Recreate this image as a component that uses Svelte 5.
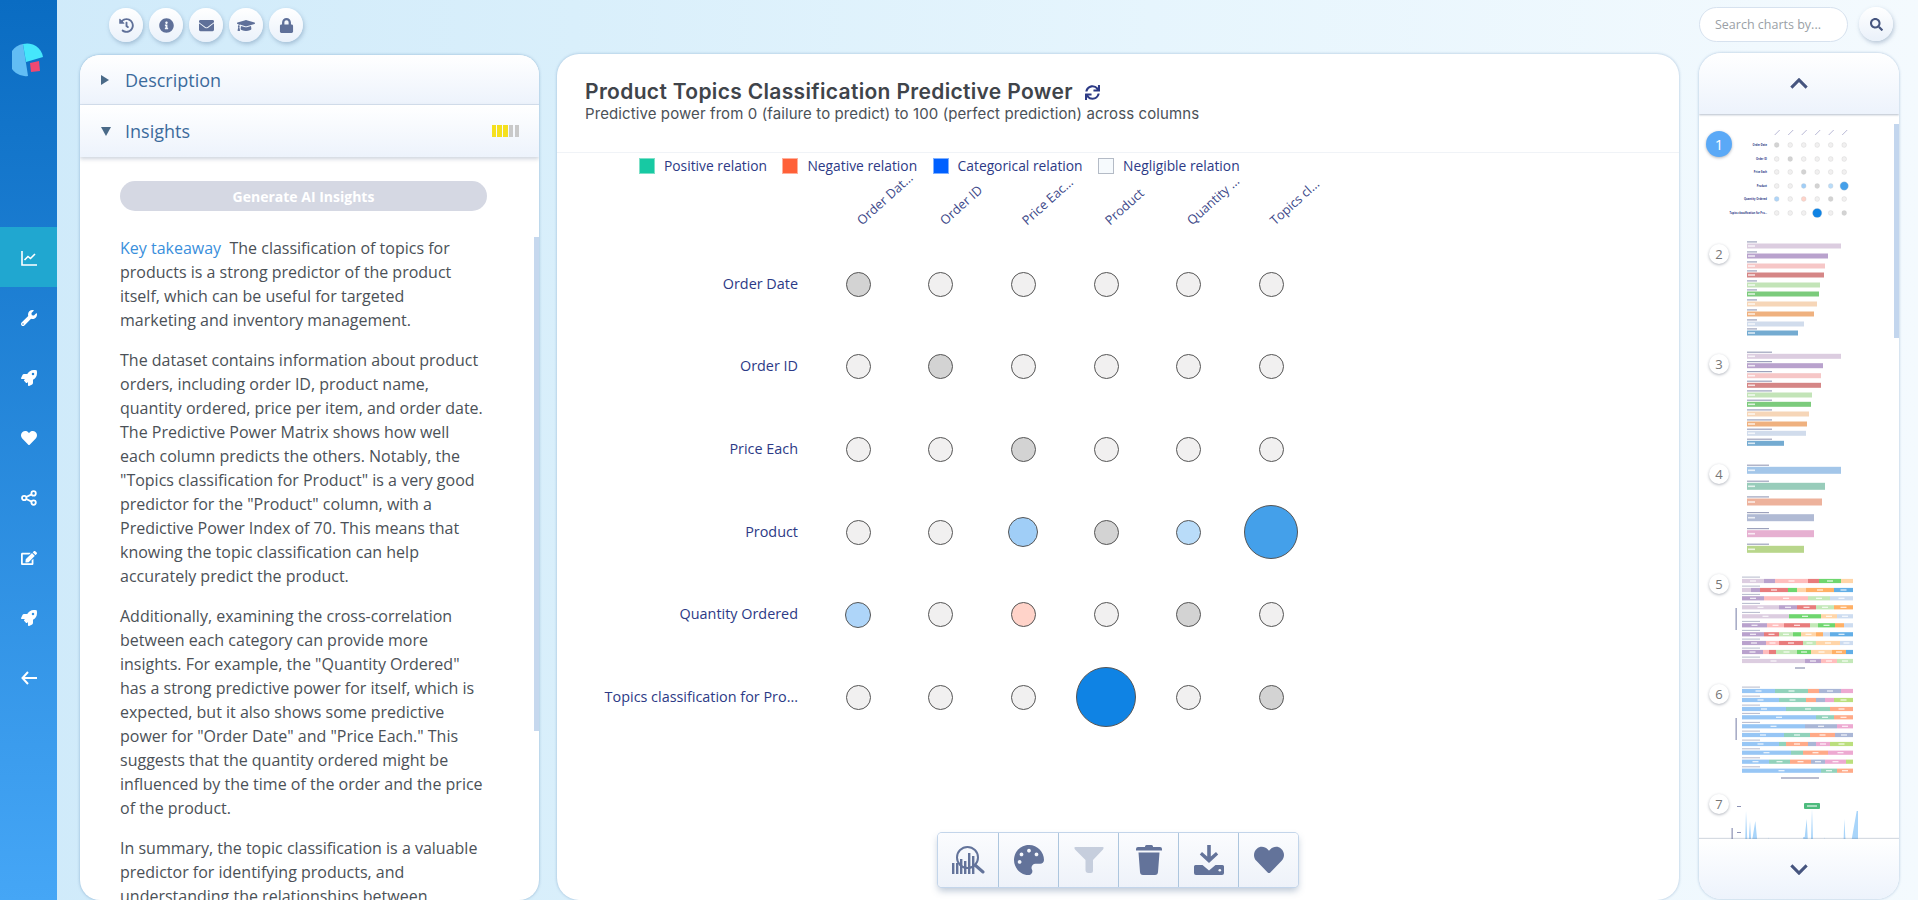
<script>
	const navIcons = [
		{ id: 'chart', active: true },
		{ id: 'wrench' },
		{ id: 'rocket' },
		{ id: 'heart' },
		{ id: 'share' },
		{ id: 'edit' },
		{ id: 'rocket' },
		{ id: 'back' }
	];

	const paths = {
		history: ['0 0 512 512', 'M504 255.531c.253 136.64-111.18 248.372-247.82 248.468-59.015.042-113.223-20.53-155.822-54.911-11.077-8.94-11.905-25.541-1.839-35.607l11.267-11.267c8.609-8.609 22.353-9.551 31.891-1.984C173.062 425.135 212.781 440 256 440c101.705 0 184-82.311 184-184 0-101.705-82.311-184-184-184-48.814 0-93.149 18.969-126.068 49.932l50.754 50.754c10.08 10.08 2.941 27.314-11.313 27.314H24c-8.837 0-16-7.163-16-16V38.627c0-14.254 17.234-21.393 27.314-11.314l49.372 49.372C129.209 34.136 189.552 8 256 8c136.81 0 247.747 110.78 248 247.531zm-180.912 78.784l9.823-12.63c8.138-10.463 6.253-25.542-4.21-33.679L288 256.349V152c0-13.255-10.745-24-24-24h-16c-13.255 0-24 10.745-24 24v135.651l65.409 50.874c10.463 8.137 25.541 6.253 33.679-4.21z'],
		info: ['0 0 512 512', 'M256 8C119.043 8 8 119.083 8 256c0 136.997 111.043 248 248 248s248-111.003 248-248C504 119.083 392.957 8 256 8zm0 110c23.196 0 42 18.804 42 42s-18.804 42-42 42-42-18.804-42-42 18.804-42 42-42zm56 254c0 6.627-5.373 12-12 12h-88c-6.627 0-12-5.373-12-12v-24c0-6.627 5.373-12 12-12h12v-64h-12c-6.627 0-12-5.373-12-12v-24c0-6.627 5.373-12 12-12h64c6.627 0 12 5.373 12 12v100h12c6.627 0 12 5.373 12 12v24z'],
		envelope: ['0 0 512 512', 'M502.3 190.8c3.9-3.1 9.7-.2 9.7 4.7V400c0 26.5-21.5 48-48 48H48c-26.5 0-48-21.5-48-48V195.6c0-5 5.7-7.8 9.7-4.7 22.4 17.4 52.1 39.5 154.1 113.6 21.1 15.4 56.7 47.8 92.2 47.6 35.7.3 72-32.8 92.3-47.6 102-74.1 131.6-96.3 154-113.7zM256 320c23.2.4 56.6-29.2 73.4-41.4 132.7-96.3 142.8-104.7 173.4-128.7 5.8-4.5 9.2-11.5 9.2-18.9v-19c0-26.5-21.5-48-48-48H48C21.5 64 0 85.5 0 112v19c0 7.4 3.4 14.3 9.2 18.9 30.6 23.9 40.7 32.4 173.4 128.7 16.8 12.2 50.2 41.8 73.4 41.4z'],
		cap: ['0 0 640 512', 'M622.34 153.2L343.4 67.5c-15.2-4.67-31.6-4.67-46.79 0L17.66 153.2c-23.54 7.23-23.54 38.36 0 45.59l48.63 14.94c-10.67 13.19-17.23 29.28-17.88 46.9C38.78 266.15 32 276.11 32 288c0 10.78 5.68 19.85 13.86 25.65L20.33 428.53C18.11 438.52 25.71 448 35.94 448h56.11c10.24 0 17.84-9.48 15.62-19.47L82.14 313.65C90.32 307.85 96 298.78 96 288c0-11.57-6.47-21.25-15.66-26.87.76-15.02 8.44-28.3 20.69-36.72L296.6 284.5c9.06 2.78 26.44 6.25 46.79 0l278.95-85.7c23.55-7.24 23.55-38.36 0-45.6zM352.79 315.09c-28.53 8.76-52.84 3.92-65.59 0l-145.02-44.55L128 384c0 35.35 85.96 64 192 64s192-28.65 192-64l-14.18-113.47-145.03 44.56z'],
		lock: ['0 0 448 512', 'M400 224h-24v-72C376 68.2 307.8 0 224 0S72 68.2 72 152v72H48c-26.5 0-48 21.5-48 48v192c0 26.5 21.5 48 48 48h352c26.5 0 48-21.5 48-48V272c0-26.5-21.5-48-48-48zm-104 0H152v-72c0-39.7 32.3-72 72-72s72 32.3 72 72v72z'],
		search: ['0 0 512 512', 'M505 442.7L405.3 343c-4.5-4.5-10.6-7-17-7H372c27.6-35.3 44-79.7 44-128C416 93.1 322.9 0 208 0S0 93.1 0 208s93.1 208 208 208c48.3 0 92.7-16.4 128-44v16.3c0 6.4 2.5 12.5 7 17l99.7 99.7c9.4 9.4 24.6 9.4 33.9 0l28.3-28.3c9.4-9.4 9.4-24.6.1-34zM208 336c-70.7 0-128-57.2-128-128 0-70.7 57.2-128 128-128 70.7 0 128 57.2 128 128 0 70.7-57.2 128-128 128z'],
		wrench: ['0 0 512 512', 'M507.73 109.1c-2.24-9.03-13.54-12.09-20.12-5.51l-74.36 74.36-67.88-11.31-11.31-67.88 74.36-74.36c6.62-6.62 3.43-17.9-5.66-20.16-47.38-11.74-99.55.91-136.58 37.93-39.64 39.64-50.55 97.1-34.05 147.2L18.74 402.76c-24.99 24.99-24.99 65.51 0 90.5 24.99 24.99 65.51 24.99 90.5 0l213.21-213.21c50.12 16.71 107.47 5.68 147.37-34.22 37.07-37.07 49.7-89.32 37.91-136.73zM64 472c-13.25 0-24-10.75-24-24 0-13.26 10.75-24 24-24s24 10.74 24 24c0 13.25-10.75 24-24 24z'],
		rocket: ['0 0 512 512', 'M505.12 19.09c-1.19-5.53-6.66-11-12.21-12.19C460.72 0 435.51 0 410.41 0 307.18 0 245.27 55.2 199.05 128H94.84c-16.35.02-35.56 11.88-42.89 26.48L2.52 253.3A28.4 28.4 0 0 0 0 264a24 24 0 0 0 24.01 24h103.81l-22.47 22.47c-11.37 11.36-13 32.26 0 45.25l50.9 50.91c11.16 11.19 32.16 13.16 45.28 0l22.47-22.47V488a24 24 0 0 0 24.01 24 28.56 28.56 0 0 0 10.71-2.52l98.73-49.39c14.63-7.3 26.51-26.5 26.51-42.86V312.8c72.6-46.31 128.03-108.41 128.03-211.1C512.08 76.5 512.08 51.3 505.12 19.09zM384.04 168a40 40 0 1 1 40.01-40 40.02 40.02 0 0 1-40.01 40z'],
		heart: ['0 0 512 512', 'M462.3 62.6C407.5 15.9 326 24.3 275.7 76.2L256 96.5l-19.7-20.3C186.1 24.3 104.5 15.9 49.7 62.6c-62.8 53.6-66.1 149.8-9.9 207.9l193.5 199.8c12.5 12.9 32.8 12.9 45.3 0l193.5-199.8c56.3-58.1 53-154.3-9.8-207.9z'],
		edit: ['0 0 576 512', 'M402.6 83.2l90.2 90.2c3.8 3.8 3.8 10 0 13.8L274.4 405.6l-92.8 10.3c-12.4 1.4-22.9-9.1-21.5-21.5l10.3-92.8L388.8 83.2c3.8-3.8 10-3.8 13.8 0zm162-22.9l-48.8-48.8c-15.2-15.2-39.9-15.2-55.2 0l-35.4 35.4c-3.8 3.8-3.8 10 0 13.8l90.2 90.2c3.8 3.8 10 3.8 13.8 0l35.4-35.4c15.2-15.3 15.2-40 0-55.2zM384 346.2V448H64V128h229.8c3.2 0 6.2-1.3 8.5-3.5l40-40c7.6-7.6 2.2-20.5-8.5-20.5H48C21.5 64 0 85.5 0 112v352c0 26.5 21.5 48 48 48h352c26.5 0 48-21.5 48-48V306.2c0-10.7-12.9-16-20.5-8.5l-40 40c-2.2 2.3-3.5 5.3-3.5 8.5z'],
		sync: ['0 0 512 512', 'M440.65 12.57l4 82.77A247.16 247.16 0 0 0 255.83 8C134.73 8 33.91 94.92 12.29 209.82A12 12 0 0 0 24.09 224h49.05a12 12 0 0 0 11.67-9.26 175.91 175.91 0 0 1 317-56.94l-101.46-4.86a12 12 0 0 0-12.57 12v47.41a12 12 0 0 0 12 12H500a12 12 0 0 0 12-12V12a12 12 0 0 0-12-12h-47.37a12 12 0 0 0-11.98 12.57zM255.83 432a175.61 175.61 0 0 1-146-77.8l101.8 4.87a12 12 0 0 0 12.57-12v-47.4a12 12 0 0 0-12-12H12a12 12 0 0 0-12 12V500a12 12 0 0 0 12 12h47.35a12 12 0 0 0 12-12.6l-4.15-82.57A247.17 247.17 0 0 0 255.83 504c121.11 0 221.93-86.92 243.55-201.82a12 12 0 0 0-11.8-14.18h-49.05a12 12 0 0 0-11.67 9.26A175.86 175.86 0 0 1 255.83 432z'],
		palette: ['0 0 512 512', 'M204.3 5C104.9 24.4 24.8 104.3 5.2 203.4c-37 187 131.7 326.4 258.8 306.7 41.2-6.4 61.4-54.6 42.5-91.7-23.1-45.4 9.9-98.4 60.9-98.4h79.7c35.8 0 64.8-29.6 64.9-65.3C511.5 97.1 368.1-26.9 204.3 5zM96 320c-17.7 0-32-14.3-32-32s14.3-32 32-32 32 14.3 32 32-14.3 32-32 32zm32-128c-17.7 0-32-14.3-32-32s14.3-32 32-32 32 14.3 32 32-14.3 32-32 32zm128-64c-17.7 0-32-14.3-32-32s14.3-32 32-32 32 14.3 32 32-14.3 32-32 32zm128 64c-17.7 0-32-14.3-32-32s14.3-32 32-32 32 14.3 32 32-14.3 32-32 32z']
	};

	const topIcons = ['history', 'info', 'envelope', 'cap', 'lock'];

	const columns = ['Order Dat...', 'Order ID', 'Price Eac...', 'Product', 'Quantity ...', 'Topics cl...'];
	const G = { f: '#f1f0f0', s: 25 };
	const D = { f: '#d3d3d3', s: 25 };
	const rows = [
		{ label: 'Order Date', cells: [D, G, G, G, G, G] },
		{ label: 'Order ID', cells: [G, D, G, G, G, G] },
		{ label: 'Price Each', cells: [G, G, D, G, G, G] },
		{ label: 'Product', cells: [G, G, { f: '#a0cef7', s: 30 }, D, { f: '#b9dcf9', s: 25 }, { f: '#44a0ea', s: 54 }] },
		{ label: 'Quantity Ordered', cells: [{ f: '#aed5f9', s: 26 }, G, { f: '#ffd3c9', s: 25 }, G, D, G] },
		{ label: 'Topics classification for Pro...', cells: [G, G, G, { f: '#0f83e4', s: 60 }, G, D] }
	];

	const legend = [
		{ label: 'Positive relation', color: '#17c9a3', border: '#7fe0c8' },
		{ label: 'Negative relation', color: '#ff6038', border: '#ffb09c' },
		{ label: 'Categorical relation', color: '#0060ff', border: '#7fb0ff' },
		{ label: 'Negligible relation', color: '#f6fafd', border: '#b4bbc6' }
	];

	// thumbnails: coordinates read off the reference, x as crop units, converted here
	const px = (z) => (z - 150) / 3;
	const round = (n) => Math.round(n * 10) / 10;

	const ramp2 = ['#dccde0', '#b9a2cd', '#f6c7c7', '#d58686', '#c3e4b8', '#7ccb7c', '#f6d6b8', '#efb17f', '#d1dcec', '#74abd1'];
	const hbars = (ys, ends, colors, h, labelW) =>
		ys.map((y, i) => ({
			y,
			x: px(201),
			w: round((ends[i] - 201) / 3),
			h,
			fill: colors[i % colors.length],
			labelW
		}));

	const t2 = hbars([22, 32, 42, 51, 61, 70, 80, 90, 100, 109], [483, 444, 435, 432, 420, 417, 411, 402, 372, 354], ramp2, 5, 10);
	const t3 = hbars([22.3, 31.7, 41.7, 51.3, 61, 70.3, 80, 90, 99.3, 109.3], [483, 429, 423, 423, 396, 393, 387, 381, 378, 312], ramp2, 5, 25);
	const t4 = hbars([26.3, 42.3, 58, 73.7, 89.7, 105.3], [483, 435, 426, 402, 402, 372], ['#a3c6e9', '#98ccba', '#edb29c', '#b0bad4', '#e6b0d1', '#b8d68b'], 7, 22);

	const c5 = { lp: '#dccde0', p: '#b9a2cd', k: '#ffbdbd', r: '#e87c7c', lg: '#c3e8b8', g: '#6ed66e', pe: '#ffd5a8', o: '#ffb066', lb: '#cddcf0', b: '#62aee6' };
	const c6 = { b: '#97c6f5', t: '#91d2bb', o: '#ffaa88', n: '#a9b6d6', k: '#eda9d1', g: '#bbdf7d' };

	const stacks = (ys, data, colors) =>
		ys.map((y, i) => {
			let from = 186;
			return {
				y,
				segs: data[i].map(([c, to]) => {
					const seg = { x: round(px(from)), w: round((to - from) / 3), fill: colors[c] };
					from = to;
					return seg;
				})
			};
		});

	const t5 = stacks([27, 36, 44.3, 53.3, 62.3, 71.3, 80.3, 89, 98, 107], [
		[['lp', 252], ['p', 285], ['k', 384], ['r', 417], ['g', 483], ['pe', 519]],
		[['lp', 213], ['p', 240], ['r', 324], ['g', 351], ['pe', 378], ['o', 462], ['b', 519]],
		[['p', 252], ['k', 384], ['lg', 450], ['lb', 519]],
		[['lp', 297], ['p', 351], ['r', 408], ['lg', 462], ['o', 519]],
		[['lp', 327], ['g', 423], ['pe', 471], ['lb', 519]],
		[['p', 261], ['k', 312], ['r', 390], ['lg', 414], ['g', 465], ['o', 492], ['lb', 519]],
		[['p', 252], ['r', 297], ['lg', 339], ['g', 363], ['pe', 408], ['o', 429], ['lb', 450], ['b', 519]],
		[['p', 258], ['k', 297], ['r', 369], ['lg', 408], ['pe', 480], ['lb', 519]],
		[['p', 249], ['k', 267], ['r', 288], ['lg', 351], ['g', 393], ['pe', 456], ['o', 498], ['b', 519]],
		[['lp', 375], ['p', 423], ['k', 471], ['lg', 519]]
	], c5);

	const t6 = stacks([27, 36, 45, 53.3, 62.3, 71, 80, 88.7, 97.7, 106.7], [
		[['b', 285], ['t', 384], ['o', 417], ['n', 483], ['k', 519]],
		[['b', 297], ['t', 378], ['o', 408], ['n', 435], ['k', 462], ['g', 519]],
		[['b', 318], ['t', 450], ['o', 519]],
		[['b', 408], ['t', 462], ['o', 519]],
		[['b', 375], ['n', 471], ['k', 519]],
		[['b', 312], ['t', 390], ['o', 465], ['n', 519]],
		[['b', 297], ['t', 318], ['o', 384], ['n', 408], ['k', 450], ['g', 519]],
		[['b', 333], ['t', 369], ['o', 444], ['k', 519]],
		[['b', 267], ['t', 330], ['o', 393], ['n', 435], ['k', 498], ['g', 519]],
		[['b', 423], ['t', 471], ['o', 519]]
	], c6);

	const thumbCols = [0, 1, 2, 3, 4, 5].map((i) => 46.7 + i * 13.5);
	const thumbRows = [31, 45, 58, 72, 85, 99];
	const thumbLabels = ['Order Date', 'Order ID', 'Price Each', 'Product', 'Quantity Ordered', 'Topics classification for Pro...'];

	const spikes = [[195, 70], [198, 32], [203, 70], [205, 68], [210, 42], [214, 64], [218, 58], [226, 42], [232, 62], [243, 62], [243, 70], [262, 70], [265, 58], [268, 70], [275, 70], [277, 64], [279, 70], [326, 70], [328, 64], [331, 64], [334, 64], [336, 70], [368, 70], [370, 58], [374, 58], [380, 40], [385, 70], [392, 70], [396, 30], [400, 70], [431, 70], [433, 58], [437, 70], [459, 70], [461, 64], [464, 70], [490, 70], [493, 40], [496, 58], [499, 70], [510, 70], [530, 32], [534, 32], [534, 70]];
	const spikePoints = spikes.map(([x, y]) => `${round(px(x))},${y + 5}`).join(' ');
</script>

<div class="page">
	<nav class="side">
		<svg class="logo" viewBox="0 0 32 34" width="32" height="34">
			<path d="M11 1 A16 16 0 0 0 16 33 L11 1 Z" fill="#62bdf4" />
			<path d="M11 1 A16 16 0 0 1 31 14 L14 19 Z" fill="#45e6fb" />
			<path d="M18 20 L27 18 L28 28 L19 29 Z" fill="#ef4872" />
		</svg>
		<ul class="nav">
			{#each navIcons as item}
				<li class:active={item.active}>
					{#if item.id === 'chart'}
						<svg viewBox="0 0 16 16" width="16" height="16" fill="none" stroke="#fff" stroke-width="1.6">
							<path d="M1 1 V15 H16" />
							<path d="M3.5 10 L7 6.5 L9.5 8.5 L14 4" />
						</svg>
					{:else if item.id === 'share'}
						<svg viewBox="0 0 16 16" width="16" height="16" fill="none" stroke="#fff" stroke-width="1.8">
							<circle cx="3.2" cy="8" r="2.2" />
							<circle cx="12.6" cy="3.4" r="2.2" />
							<circle cx="12.6" cy="12.6" r="2.2" />
							<path d="M5.2 7 L10.6 4.4 M5.2 9 L10.6 11.6" />
						</svg>
					{:else if item.id === 'back'}
						<svg viewBox="0 0 16 16" width="16" height="16" fill="none" stroke="#fff" stroke-width="2">
							<path d="M7 2 L1.5 8 L7 14 M1.5 8 H16" />
						</svg>
					{:else}
						<svg viewBox={paths[item.id][0]} width="16" height="16" fill="#fff"><path d={paths[item.id][1]} /></svg>
					{/if}
				</li>
			{/each}
		</ul>
	</nav>

	<div class="leftcol">
		<div class="topbar">
			{#each topIcons as id}
				<button class="round" aria-label={id}>
					<svg viewBox={paths[id][0]} width={id === 'cap' ? 18 : 15} height="15" fill="#5f7099"><path d={paths[id][1]} /></svg>
				</button>
			{/each}
		</div>
		<section class="panel">
			<header class="acc first">
				<span class="tri right"></span>
				<span class="acc-title">Description</span>
			</header>
			<header class="acc second">
				<span class="tri down"></span>
				<span class="acc-title">Insights</span>
				<span class="meter">
					<i class="on"></i><i class="on"></i><i class="on"></i><i></i><i></i>
				</span>
			</header>
			<div class="insights">
				<button class="generate">Generate AI Insights</button>
				<p><span class="key">Key takeaway</span>&nbsp; The classification of topics for products is a strong predictor of the product itself, which can be useful for targeted marketing and inventory management.</p>
				<p>The dataset contains information about product orders, including order ID, product name, quantity ordered, price per item, and order date. The Predictive Power Matrix shows how well each column predicts the others. Notably, the "Topics classification for Product" is a very good predictor for the "Product" column, with a Predictive Power Index of 70. This means that knowing the topic classification can help accurately predict the product.</p>
				<p>Additionally, examining the cross-correlation between each category can provide more insights. For example, the "Quantity Ordered" has a strong predictive power for itself, which is expected, but it also shows some predictive power for "Order Date" and "Price Each." This suggests that the quantity ordered might be influenced by the time of the order and the price of the product.</p>
				<p>In summary, the topic classification is a valuable predictor for identifying products, and understanding the relationships between</p>
			</div>
			<div class="scroll-left"></div>
		</section>
	</div>

	<main class="chart">
		<div class="head">
			<h1>Product Topics Classification Predictive Power
				<svg viewBox={paths.sync[0]} width="15" height="15" fill="#2c3a86"><path d={paths.sync[1]} /></svg>
			</h1>
			<p>Predictive power from 0 (failure to predict) to 100 (perfect prediction) across columns</p>
		</div>
		<div class="legend">
			{#each legend as l}
				<span class="legend-item">
					<i style="background:{l.color};border-color:{l.border}"></i>{l.label}
				</span>
			{/each}
		</div>
		<div class="matrix">
			<div class="corner"></div>
			{#each columns as c}
				<div class="col-head"><span>{c}</span></div>
			{/each}
			{#each rows as r}
				<div class="row-label">{r.label}</div>
				{#each r.cells as cell}
					<div class="cell">
						<span class="dot" style="width:{cell.s}px;height:{cell.s}px;background:{cell.f}"></span>
					</div>
				{/each}
			{/each}
		</div>
		<div class="tools">
			<button aria-label="Insights">
				<svg viewBox="0 0 33 28" width="33" height="28" fill="#63739a">
					<rect x="0" y="17" width="2.4" height="11" /><rect x="4" y="17" width="2.4" height="11" />
					<rect x="8" y="13" width="2.4" height="15" /><rect x="12" y="15" width="2.4" height="13" />
					<rect x="16" y="7" width="2.4" height="21" /><rect x="20" y="10" width="2.4" height="18" />
					<circle cx="15.5" cy="11.5" r="10.5" fill="none" stroke="#63739a" stroke-width="2" />
					<path d="M23 19 L31 26" stroke="#63739a" stroke-width="3" stroke-linecap="round" />
				</svg>
			</button>
			<button aria-label="Colors">
				<svg viewBox={paths.palette[0]} width="30" height="30" fill="#63739a"><path d={paths.palette[1]} /></svg>
			</button>
			<button aria-label="Filter">
				<svg viewBox="0 0 30 26" width="30" height="26" fill="#c6cedd">
					<path d="M1.5 0 H28.5 Q30.5 0 29 2.5 L19 13 V24 Q19 26 17 26 H14.5 Q11.5 26 11.5 23 V13 L1 2.5 Q-0.5 0 1.5 0 Z" />
				</svg>
			</button>
			<button aria-label="Delete">
				<svg viewBox="0 0 26 30" width="26" height="30" fill="#63739a">
					<path d="M9 1.5 Q9 0 10.5 0 H15.5 Q17 0 17 1.5 V2 H24 Q26 2 26 4 V5.5 H0 V4 Q0 2 2 2 H9 Z" />
					<path d="M2.5 7.5 H23.5 L22 27 Q21.8 30 19 30 H7 Q4.2 30 4 27 Z" />
				</svg>
			</button>
			<button aria-label="Download">
				<svg viewBox="0 0 30 30" width="30" height="30" fill="#63739a">
					<path d="M13.2 0 H16.8 V11.5 L22 7 L24.2 9.6 L15 18 L5.8 9.6 L8 7 L13.2 11.5 Z" />
					<path d="M1.5 20 H8.5 L15 25.5 L21.5 20 H28.5 Q30 20 30 21.5 V28 Q30 30 28 30 H2 Q0 30 0 28 V21.5 Q0 20 1.5 20 Z" />
					<circle cx="25.8" cy="25.2" r="1.3" fill="#f3f6fb" />
				</svg>
			</button>
			<button aria-label="Favourite">
				<svg viewBox={paths.heart[0]} width="30" height="30" fill="#63739a"><path d={paths.heart[1]} /></svg>
			</button>
		</div>
	</main>

	<aside class="rightcol">
		<div class="searchrow">
			<input class="search" placeholder="Search charts by..." />
			<button class="round" aria-label="Search">
				<svg viewBox={paths.search[0]} width="13" height="13" fill="#46557f"><path d={paths.search[1]} /></svg>
			</button>
		</div>
		<section class="gallery">
			<button class="pager up" aria-label="Previous">
				<svg viewBox="0 0 20 12" width="18" height="11" fill="none" stroke="#46557f" stroke-width="3.4"><path d="M1.5 10.5 L10 2 L18.5 10.5" /></svg>
			</button>
			<div class="list">
				<!-- 1: matrix -->
				<div class="item">
					<span class="badge current">1</span>
					<svg class="thumb" viewBox="0 0 165 110">
						{#each thumbCols as x}
							<path d="M{x - 2} 21 L{x + 3} 16" stroke="#b9b9d6" stroke-width="1" />
						{/each}
						{#each thumbRows as y, ri}
							<text x="37" y={y + 1} class="tiny" text-anchor="end">{thumbLabels[ri]}</text>
							{#each thumbCols as x, ci}
								<circle cx={x} cy={y} r={rows[ri].cells[ci].s > 40 ? rows[ri].cells[ci].s / 13 : 2.4} fill={rows[ri].cells[ci].f} stroke="#c4c4c4" stroke-width="0.3" />
							{/each}
						{/each}
					</svg>
				</div>
				<!-- 2-4: bars -->
				{#each [t2, t3, t4] as bars, bi}
					<div class="item">
						<span class="badge">{bi + 2}</span>
						<svg class="thumb" viewBox="0 0 165 110">
							{#each bars as b}
								<rect x={b.x} y={b.y - b.h / 2 - 2.2} width={b.labelW} height="1.2" fill="#5c648f" opacity="0.6" />
								<rect x={b.x} y={b.y - b.h / 2} width={b.w} height={b.h} fill={b.fill} />
								<rect x={b.x + 1} y={b.y - 0.8} width="7" height="1.6" fill="#fff" opacity="0.75" />
							{/each}
						</svg>
					</div>
				{/each}
				<!-- 5-6: stacked -->
				{#each [t5, t6] as stack, si}
					<div class="item">
						<span class="badge">{si + 5}</span>
						<svg class="thumb" viewBox="0 0 165 110">
							{#each stack as row}
								<rect x={px(186)} y={row.y - 4.4} width="18" height="1" fill="#5c648f" opacity="0.45" />
								{#each row.segs as s}
									<rect x={s.x} y={row.y - 2.1} width={s.w} height="4.2" fill={s.fill} />
									{#if s.w > 12}
										<rect x={s.x + s.w / 2 - 3} y={row.y - 0.6} width="6" height="1.2" fill="#fff" opacity="0.85" />
									{/if}
								{/each}
							{/each}
							<rect x="5.5" y="54" width="1.3" height="22" fill="#3c467f" opacity="0.55" />
							<rect x={si ? 51 : 65} y="113.4" width={si ? 38 : 10} height="1.2" fill="#5c648f" opacity="0.7" />
						</svg>
					</div>
				{/each}
				<!-- 7: area -->
				<div class="item">
					<span class="badge">7</span>
					<svg class="thumb" viewBox="0 0 165 110">
						<rect x="7" y="32" width="4" height="1" fill="#8d93b5" />
						<rect x="7" y="58" width="4" height="1" fill="#8d93b5" />
						<rect x="1.5" y="54" width="1.3" height="12" fill="#3c467f" opacity="0.55" />
						<polygon points={spikePoints} fill="#a9d5fa" />
						<rect x="74" y="29" width="16" height="6" rx="1" fill="#4dbb7d" />
						<rect x="77" y="31.4" width="10" height="1.2" fill="#fff" opacity="0.85" />
					</svg>
				</div>
			</div>
			<div class="scroll-right"></div>
			<button class="pager down" aria-label="Next">
				<svg viewBox="0 0 20 12" width="18" height="11" fill="none" stroke="#46557f" stroke-width="3.4"><path d="M1.5 1.5 L10 10 L18.5 1.5" /></svg>
			</button>
		</section>
	</aside>
</div>

<style>
	:global(body) {
		margin: 0;
		font-family: 'Open Sans', sans-serif;
	}

	.page {
		display: flex;
		width: 1918px;
		height: 900px;
		overflow: hidden;
		background: linear-gradient(90deg, #cfeafa 0%, #d9effb 30%, #e6f5fd 60%, #f4fafe 100%);
	}

	/* sidebar */
	.side {
		width: 57px;
		flex: none;
		background: linear-gradient(180deg, #0a6cc2 0%, #45a6f6 100%);
		display: flex;
		flex-direction: column;
	}

	.logo {
		margin: 43px 0 0 12px;
	}

	.nav {
		list-style: none;
		margin: 150px 0 0;
		padding: 0;
	}

	.nav li {
		height: 60px;
		box-sizing: border-box;
		padding-top: 2px;
		display: flex;
		align-items: center;
		justify-content: center;
	}

	.nav li.active {
		background: #20a7d0;
	}

	/* left column */
	.leftcol {
		width: 459px;
		margin-left: 23px;
		flex: none;
	}

	.topbar {
		height: 55px;
		box-sizing: border-box;
		padding: 8px 0 0 29px;
		display: flex;
		gap: 6px;
	}

	.round {
		width: 34px;
		height: 34px;
		border: 0;
		padding: 0;
		border-radius: 50%;
		background: linear-gradient(180deg, #fff, #eaf1fa);
		box-shadow: 1px 2px 4px rgba(70, 100, 140, 0.35);
		display: flex;
		align-items: center;
		justify-content: center;
		flex: none;
	}

	.panel {
		position: relative;
		height: 845px;
		background: #fff;
		border-radius: 20px;
		box-shadow: 0 0 3px rgba(70, 120, 170, 0.5);
		overflow: hidden;
	}

	.acc {
		display: flex;
		align-items: center;
		padding-left: 21px;
		box-sizing: border-box;
		background: linear-gradient(180deg, #fff, #edf3fc);
	}

	.acc.first {
		height: 50px;
		border-bottom: 1px solid #d5e0ee;
	}

	.acc.second {
		height: 52px;
		box-shadow: 0 2px 4px rgba(90, 110, 140, 0.3);
		position: relative;
	}

	.acc-title {
		font-size: 18px;
		color: #3c6b9c;
		margin-left: 14px;
	}

	.tri {
		width: 0;
		height: 0;
		display: block;
	}

	.tri.right {
		border-left: 8px solid #4a6a88;
		border-top: 5px solid transparent;
		border-bottom: 5px solid transparent;
		margin-right: 2px;
	}

	.tri.down {
		border-top: 9px solid #4a6a88;
		border-left: 5px solid transparent;
		border-right: 5px solid transparent;
	}

	.meter {
		margin-left: auto;
		margin-right: 20px;
		display: flex;
		gap: 1.2px;
	}

	.meter i {
		width: 4.5px;
		height: 12px;
		background: #c9c9c9;
	}

	.meter i.on {
		background: #f5e01e;
	}

	.insights {
		padding: 24px 55px 0 40px;
		color: #4b5157;
		font-size: 16px;
		line-height: 24px;
	}

	.generate {
		display: block;
		width: 367px;
		height: 30px;
		border: 0;
		border-radius: 15px;
		background: #d5d8e3;
		color: #fff;
		font: 700 14px 'Open Sans', sans-serif;
		margin-bottom: 25px;
	}

	.insights p {
		margin: 0 0 16px;
	}

	.key {
		color: #3a8fdc;
	}

	.scroll-left {
		position: absolute;
		right: 0;
		top: 182px;
		width: 5px;
		height: 494px;
		background: #c6d8ee;
	}

	/* chart */
	.chart {
		width: 1122px;
		height: 846px;
		margin: 54px 0 0 18px;
		flex: none;
		background: #fff;
		border-radius: 22px;
		box-shadow: 0 0 3px rgba(70, 120, 170, 0.45);
		display: flex;
		flex-direction: column;
	}

	.head {
		height: 99px;
		box-sizing: border-box;
		padding: 26px 0 0 28px;
		border-bottom: 1px solid #f0f3f7;
		flex: none;
	}

	.head h1 {
		margin: 0;
		font: 600 21px/24px 'Inter', sans-serif;
		letter-spacing: 0.33px;
		color: #3f444a;
	}

	.head h1 svg {
		margin-left: 7px;
		vertical-align: -1px;
	}

	.head p {
		margin: 0;
		font: 400 15px/20px 'Inter', sans-serif;
		letter-spacing: 0.1px;
		color: #4b5157;
	}

	.legend {
		display: flex;
		height: 25px;
		align-items: center;
		padding-left: 82px;
		gap: 15.5px;
		flex: none;
	}

	.legend-item {
		display: flex;
		align-items: center;
		font-size: 13.8px;
		color: #2c3a86;
	}

	.legend-item i {
		width: 16px;
		height: 16px;
		box-sizing: border-box;
		border: 1px solid;
		margin-right: 9px;
	}

	.matrix {
		display: grid;
		grid-template-columns: 241px repeat(6, 82.6px);
		grid-template-rows: 65px repeat(6, 82.6px);
		margin-left: 19px;
		flex: none;
	}

	.col-head {
		position: relative;
	}

	.col-head span {
		position: absolute;
		left: 47px;
		bottom: 15px;
		transform-origin: 0 100%;
		transform: rotate(-42deg);
		white-space: nowrap;
		font-size: 12.8px;
		line-height: 16px;
		color: #3e4a8a;
	}

	.row-label {
		text-align: right;
		padding-right: 19px;
		font-size: 14.4px;
		color: #2c3a86;
		align-self: center;
		white-space: nowrap;
		margin-top: -2px;
	}

	.cell {
		display: flex;
		align-items: center;
		justify-content: center;
	}

	.dot {
		display: block;
		box-sizing: border-box;
		border: 1px solid #555;
		border-radius: 50%;
	}

	.tools {
		margin: auto auto 13px;
		display: flex;
		height: 54px;
		border-radius: 4px;
		background: linear-gradient(180deg, #fbfcfe, #eef2f9);
		box-shadow:
			0 0 0 1px #c3d5ea,
			0 4px 7px rgba(70, 100, 140, 0.35);
	}

	.tools button {
		width: 60px;
		padding: 0;
		border: 0;
		border-left: 1px solid #adc6de;
		background: none;
		display: flex;
		align-items: center;
		justify-content: center;
	}

	.tools button:first-child {
		border-left: 0;
	}

	/* right column */
	.rightcol {
		width: 200px;
		margin-left: 20px;
		flex: none;
	}

	.searchrow {
		height: 53px;
		box-sizing: border-box;
		padding-top: 7px;
		display: flex;
		gap: 11px;
		align-items: flex-start;
	}

	.search {
		width: 149px;
		height: 35px;
		box-sizing: border-box;
		border: 1px solid #d7e2ef;
		border-radius: 18px;
		background: #fff;
		padding: 0 15px;
		font: 400 12.5px 'Open Sans', sans-serif;
	}

	.search::placeholder {
		color: #9a9fa6;
	}

	.gallery {
		position: relative;
		height: 846px;
		background: #fff;
		border-radius: 22px;
		box-shadow: 0 0 3px rgba(70, 120, 170, 0.45);
		display: flex;
		flex-direction: column;
		overflow: hidden;
	}

	.pager {
		flex: none;
		border: 0;
		padding: 0;
		background: linear-gradient(180deg, #fff, #edf3fc);
		display: flex;
		align-items: center;
		justify-content: center;
		position: relative;
		z-index: 1;
	}

	.pager.up {
		height: 61px;
		box-shadow: 0 1px 2px rgba(90, 110, 140, 0.45);
	}

	.pager.down {
		height: 60px;
		box-shadow: 0 -1px 1px rgba(90, 110, 140, 0.25);
	}

	.list {
		flex: 1;
		min-height: 0;
		overflow: hidden;
	}

	.item {
		height: 110px;
		display: grid;
		grid-template-columns: 20px 165px;
		column-gap: 1px;
		padding-left: 10px;
		box-sizing: border-box;
	}

	.badge {
		width: 20px;
		height: 20px;
		margin-top: 20px;
		border-radius: 50%;
		background: #fff;
		box-shadow: 0 1px 3px rgba(60, 70, 90, 0.4);
		color: #777;
		font-size: 13px;
		line-height: 20px;
		text-align: center;
	}

	.badge.current {
		width: 26px;
		height: 26px;
		margin: 17px 0 0 -3px;
		background: #5aa9f7;
		color: #fff;
		font-size: 15px;
		line-height: 26px;
	}

	.thumb {
		width: 165px;
		height: 110px;
		overflow: visible;
	}

	.tiny {
		font: 700 2.6px 'Open Sans', sans-serif;
		fill: #2c3a86;
	}

	.scroll-right {
		position: absolute;
		right: 0;
		top: 71px;
		width: 5px;
		height: 214px;
		background: #c3d6ee;
	}
</style>
